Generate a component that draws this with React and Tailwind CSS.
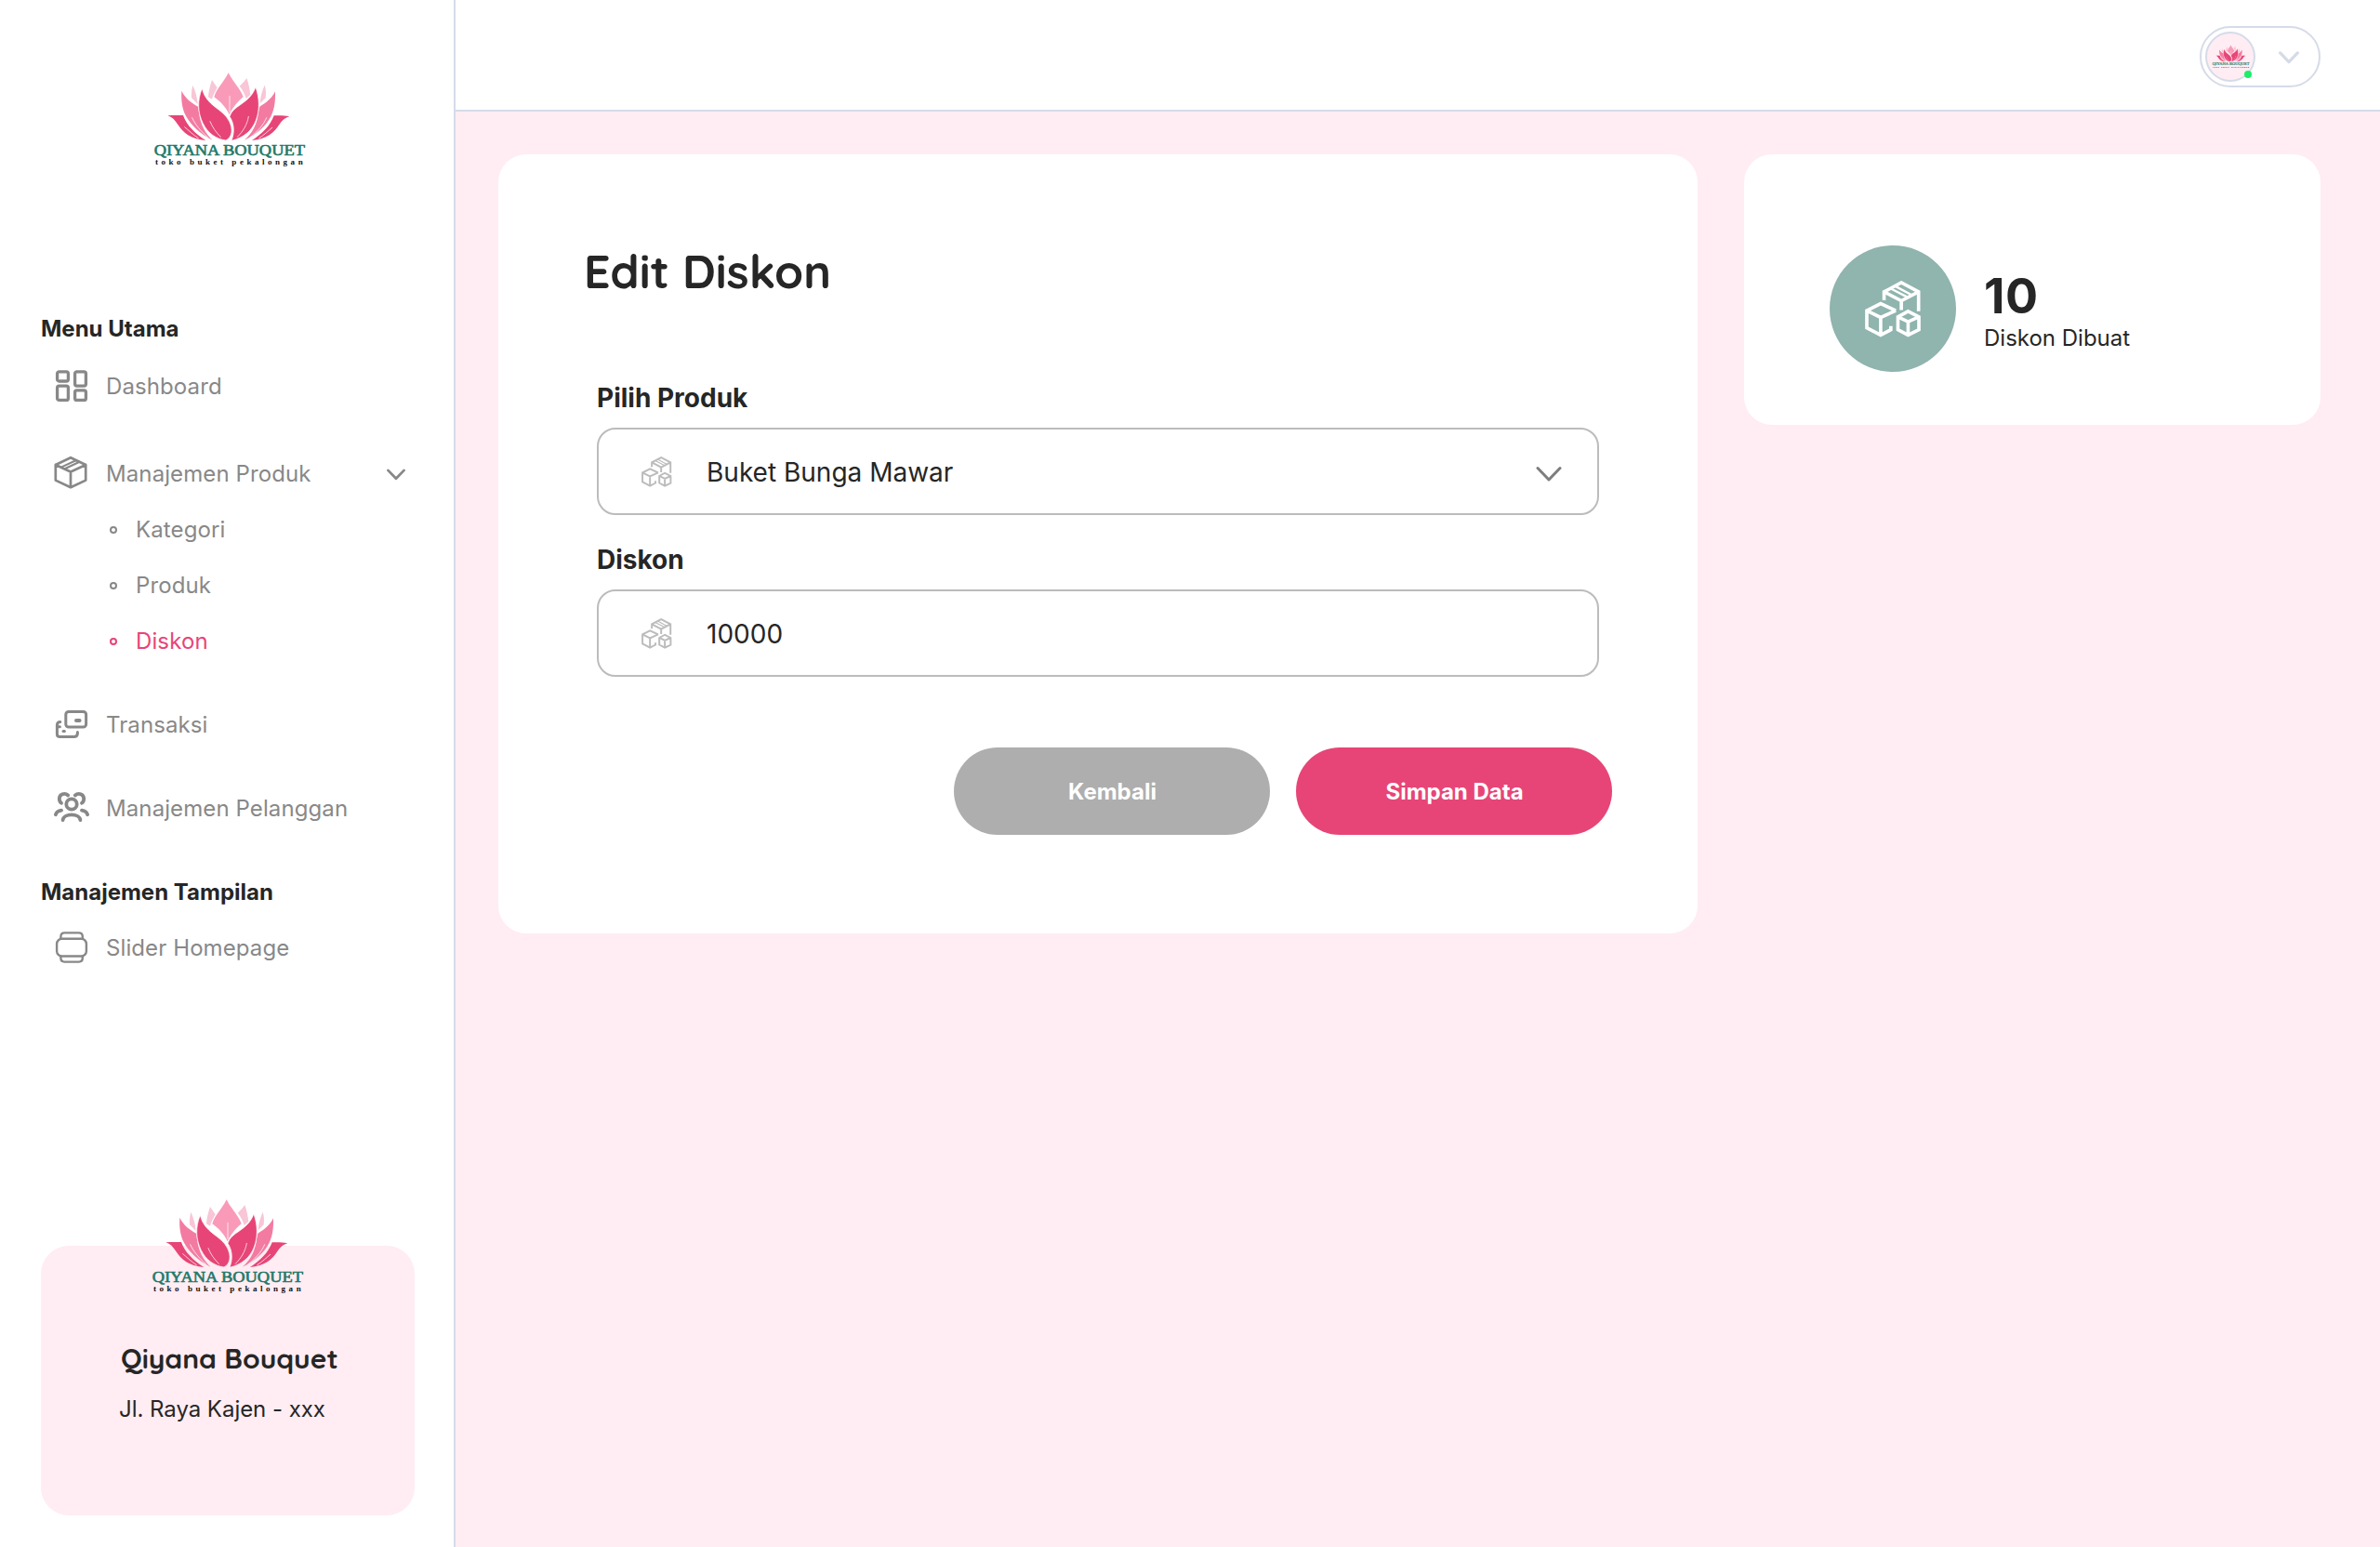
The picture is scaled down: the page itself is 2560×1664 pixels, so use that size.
const GREY = "#888888";

function Logo({ className }) {
  return (
    <svg viewBox="0 0 600 390" className={className}>
      <g fill="#f8c6d7">
        <path d="M234 78C228 96 223 116 222 133L234 140C238 126 244 115 251 103C245 94 239 86 234 78Z" />
        <path d="M346 72C340 81 332 90 323 98C333 110 340 124 344 138L358 126C356 108 352 89 346 72Z" />
        <path d="M172 95C168 110 167 125 168 136L188 156C186 132 180 112 172 95Z" />
        <path d="M404 95C396 112 390 132 389 154L407 136C409 120 408 108 404 95Z" />
      </g>
      <path fill="#f99ab9" d="M287 55C272 86 250 104 241 133C262 148 279 166 290 190C300 168 316 148 335 133C325 104 302 86 287 55Z" />
      <g fill="#f37ba2">
        <path d="M136 113C134 145 138 172 150 194C165 222 195 252 236 272C212 250 196 222 191 176L189 164C168 152 148 138 136 113Z" />
        <path d="M438 115C439 146 436 172 425 194C411 222 380 254 338 272C364 250 380 222 385 176L388 164C408 152 427 138 438 115Z" />
      </g>
      <g fill="#e74577">
        <path d="M91 193C108 191 125 192 141 192C152 224 180 252 214 273C165 270 140 246 124 222C115 208 105 197 91 193Z" />
        <path d="M484 196C466 192 450 193 434 193C422 226 396 252 363 273C410 270 436 246 451 222C461 208 470 200 484 196Z" />
        <path stroke="#fff" strokeWidth="2" d="M202 106C186 144 188 184 205 218C221 250 246 268 279 273C300 262 302 236 290 212C270 170 216 164 202 106Z" />
        <path stroke="#fff" strokeWidth="2" d="M375 101C356 156 302 158 291 196C307 220 307 248 297 274C336 264 362 244 376 208C389 172 387 136 375 101Z" />
      </g>
      <g fill="none" stroke="#fff" strokeWidth="2.2" strokeLinecap="round">
        <path d="M291 130V182M228 212C235 230 247 247 262 262M352 196C348 222 334 244 316 262M170 200C180 222 198 244 220 262M410 200C400 224 380 246 356 264M146 230C158 240 172 254 190 266M428 232C416 242 402 256 386 266" />
      </g>
      <text x="47" y="322" fontFamily="'Liberation Serif', serif" fontSize="53" fill="#23796a" stroke="#23796a" strokeWidth="2" textLength="487" lengthAdjust="spacingAndGlyphs">QIYANA BOUQUET</text>
      <text x="51" y="350" fontFamily="'Liberation Serif', serif" fontWeight="700" fontSize="27" fill="#111111" textLength="476" lengthAdjust="spacing">toko buket pekalongan</text>
    </svg>
  );
}

function Cubes({ className }) {
  return (
    <svg viewBox="48 35 184 184" fill="none" stroke="currentColor" strokeWidth="11" className={className}>
      <path d="M110 98V71L166 41L222 71V134M110 71L166 100L222 71M166 100V130" />
      <path strokeWidth="7" d="M131 60L187 89M145 52L201 82" />
      <path d="M148 132L99 109L54 132V188L99 211L132 194V182M54 132L99 154L148 132M99 154V211" />
      <path d="M188 134L223 152V194L188 211L155 194V152ZM155 152L188 168L223 152M188 168V211" />
    </svg>
  );
}

function NavIcon({ children, width = 3.3 }) {
  return (
    <svg viewBox="0 0 38 38" fill="none" stroke={GREY} strokeWidth={width} strokeLinecap="round" strokeLinejoin="round" className="h-[38px] w-[38px] shrink-0">
      {children}
    </svg>
  );
}

const DashboardIcon = () => (
  <NavIcon>
    <rect x="3.6" y="3.8" width="11.8" height="10.2" rx="2" />
    <rect x="22.6" y="3.8" width="11.8" height="15.3" rx="2" />
    <rect x="3.6" y="19.2" width="11.8" height="15.2" rx="2" />
    <rect x="22.6" y="23.8" width="11.8" height="10.6" rx="2" />
  </NavIcon>
);

const BoxIcon = () => (
  <NavIcon width={2.7}>
    <path d="M18 2.2L34.2 10V26.6L18 34.2L1.8 26.6V10ZM1.8 10L18 17.5L34.2 10M18 17.5V34.2" />
    <path strokeWidth="2.1" d="M8.2 12.4L24.2 5M11.6 14.2L27.6 6.8" />
  </NavIcon>
);

const CardsIcon = () => (
  <NavIcon width={3}>
    <rect x="12.8" y="5.4" width="21.8" height="16.6" rx="3" />
    <path d="M6.8 16.6C4.6 16.6 3.4 17.6 3.4 19.8V29.4C3.4 31.4 4.6 32.5 6.6 32.5H21.4C24 32.5 25.4 31.4 25.4 28.8V27.6M3.4 21.8H6.4M10 26.4H11.4" />
    <path strokeWidth="4" d="M24 15.1H27.6" />
  </NavIcon>
);

const PeopleIcon = () => (
  <NavIcon width={3.8}>
    <circle cx="19" cy="15" r="5.7" />
    <path d="M9.6 32.2C10.2 24.4 27.8 24.4 28.4 32.2" />
    <path d="M15.2 5.5C11.6 2.2 5.8 4.4 5.8 9.2C5.8 11.2 6.4 12.6 8 13.8M22.8 5.5C26.4 2.2 32.2 4.4 32.2 9.2C32.2 11.2 31.6 12.6 30 13.8" />
    <path d="M1.9 26.2C2.6 23.4 4.8 22 8 21.6M36.1 26.2C35.4 23.4 33.2 22 30 21.6" />
  </NavIcon>
);

const SliderIcon = () => (
  <NavIcon width={2.4}>
    <rect x="3.1" y="9.7" width="31.8" height="18.8" rx="5.5" />
    <path d="M7.4 9.6V7.4Q7.4 3.4 11.4 3.4H26.8Q30.8 3.4 30.8 7.4V9.6M7.4 28.6V30.6Q7.4 34.6 11.4 34.6H26.8Q30.8 34.6 30.8 30.6V28.6" />
  </NavIcon>
);

function Chevron({ className, width = 2.6 }) {
  return (
    <svg viewBox="0 0 28 18" fill="none" stroke="currentColor" strokeWidth={width} strokeLinecap="round" strokeLinejoin="round" className={className}>
      <path d="M2 2.5L14 15L26 2.5" />
    </svg>
  );
}

function NavItem({ icon, children, className = "" }) {
  return (
    <div className={`flex h-[60px] items-center pl-[58px] text-2xl tracking-[0.1px] text-[#888888] ${className}`}>
      {icon}
      <span className="mt-[2px] ml-[18px]">{children}</span>
    </div>
  );
}

function SubItem({ active, children }) {
  return (
    <div className={`flex h-[60px] items-center pl-[118px] text-2xl tracking-[0.12px] ${active ? "text-[#e74577]" : "text-[#888888]"}`}>
      <span className="mt-px h-2 w-2 rounded-full border-2 border-current" />
      <span className="mt-[2px] ml-5">{children}</span>
    </div>
  );
}

function Heading({ children, className = "" }) {
  return <h2 className={`flex h-[60px] items-center pl-11 text-2xl font-bold ${className}`}>{children}</h2>;
}

function Field({ label, value, chevron, className = "" }) {
  return (
    <div className={className}>
      <div className="text-[28px] leading-8 font-bold">{label}</div>
      <div className="mt-4 flex h-[94px] w-[1078px] items-center rounded-[20px] border-2 border-[#bcbcbc] pr-[38px] pl-[46px]">
        <Cubes className="h-[33px] w-[33px] text-[#bcbcbc]" />
        <span className="mt-[2px] ml-[37px] flex-1 text-[28px]">{value}</span>
        {chevron && <Chevron className="mt-[5px] h-[18px] w-7 text-[#7e7e7e]" width={3} />}
      </div>
    </div>
  );
}

export default function App() {
  return (
    <div className="flex h-[1664px] w-[2560px] overflow-hidden bg-[#ffedf3] font-['Inter',sans-serif] text-[#262626]">
      <aside className="flex w-[490px] shrink-0 flex-col border-r-2 border-[#d5dbe8] bg-white">
        <Logo className="mt-[60px] ml-[150px] h-[130px] w-[200px]" />
        <nav className="mt-[134px]">
          <Heading>Menu Utama</Heading>
          <NavItem icon={<DashboardIcon />} className="mt-px">Dashboard</NavItem>
          <div className="mt-[34px] flex items-center">
            <NavItem icon={<BoxIcon />} className="flex-1">Manajemen Produk</NavItem>
            <Chevron className="mt-[2px] mr-[52px] h-[13px] w-5 text-[#888888]" width={3.8} />
          </div>
          <SubItem>Kategori</SubItem>
          <SubItem>Produk</SubItem>
          <SubItem active>Diskon</SubItem>
          <NavItem icon={<CardsIcon />} className="mt-[30px]">Transaksi</NavItem>
          <NavItem icon={<PeopleIcon />} className="mt-[30px]">Manajemen Pelanggan</NavItem>
          <Heading className="mt-[31px]">Manajemen Tampilan</Heading>
          <NavItem icon={<SliderIcon />} className="-mt-px">Slider Homepage</NavItem>
        </nav>
        <div className="mt-auto mb-[34px] ml-11 h-[290px] w-[402px] rounded-[30px] bg-[#ffedf3]">
          <Logo className="-mt-[68px] ml-[104px] h-[130px] w-[200px]" />
          <div className="mt-10 ml-[86px] font-['Quicksand','Lato',sans-serif] text-[30px] leading-[38px] font-bold whitespace-nowrap">Qiyana Bouquet</div>
          <div className="mt-5 ml-[84px] text-2xl tracking-[-0.04px] whitespace-nowrap">Jl. Raya Kajen - xxx</div>
        </div>
      </aside>

      <div className="flex flex-1 flex-col">
        <header className="flex h-[120px] items-start justify-end border-b-2 border-[#d5dbe8] bg-white pt-7 pr-16">
          <div className="flex h-[66px] w-[130px] items-center rounded-full border-2 border-[#d5dbe8] pl-1">
            <div className="relative flex h-[54px] w-[54px] items-center justify-center rounded-full border-2 border-[#d5dbe8] bg-[#ffedf3]">
              <Logo className="-mt-[3px] ml-[3px] h-[32px] w-[49px] shrink-0" />
              <span className="absolute right-0.5 bottom-0.5 h-2 w-2 rounded-full bg-[#1bee68]" />
            </div>
            <Chevron className="mt-[2px] ml-[25px] h-[14px] w-[22px] text-[#d5dbe8]" width={4.2} />
          </div>
        </header>

        <main className="flex items-start gap-[50px] pt-[46px] pl-[46px]">
          <section className="h-[838px] w-[1290px] rounded-[30px] bg-white pt-[96px] pl-[106px]">
            <h1 className="-ml-[14px] font-['Quicksand','Lato',sans-serif] text-[50px] leading-[60px] font-bold">Edit Diskon</h1>
            <Field className="mt-[90px]" label="Pilih Produk" value="Buket Bunga Mawar" chevron />
            <Field className="mt-8" label="Diskon" value="10000" />
            <div className="mt-[76px] ml-[384px] flex gap-7">
              <button className="h-[94px] w-[340px] rounded-full bg-[#aeaeae] pt-[2px] pl-px text-2xl font-bold text-white">Kembali</button>
              <button className="h-[94px] w-[340px] rounded-full bg-[#e74577] pt-[2px] pl-px text-2xl font-bold text-white">Simpan Data</button>
            </div>
          </section>

          <section className="flex h-[291px] w-[620px] items-start rounded-[30px] bg-white pt-[98px] pl-[92px]">
            <div className="flex h-[136px] w-[136px] items-center justify-center rounded-full bg-[#90b4ae]">
              <Cubes className="h-[61px] w-[61px] text-white" />
            </div>
            <div className="mt-[27px] ml-[30px]">
              <div className="text-[52px] leading-[56px] font-bold tracking-[0.5px]">10</div>
              <div className="mt-px text-2xl">Diskon Dibuat</div>
            </div>
          </section>
        </main>
      </div>
    </div>
  );
}
